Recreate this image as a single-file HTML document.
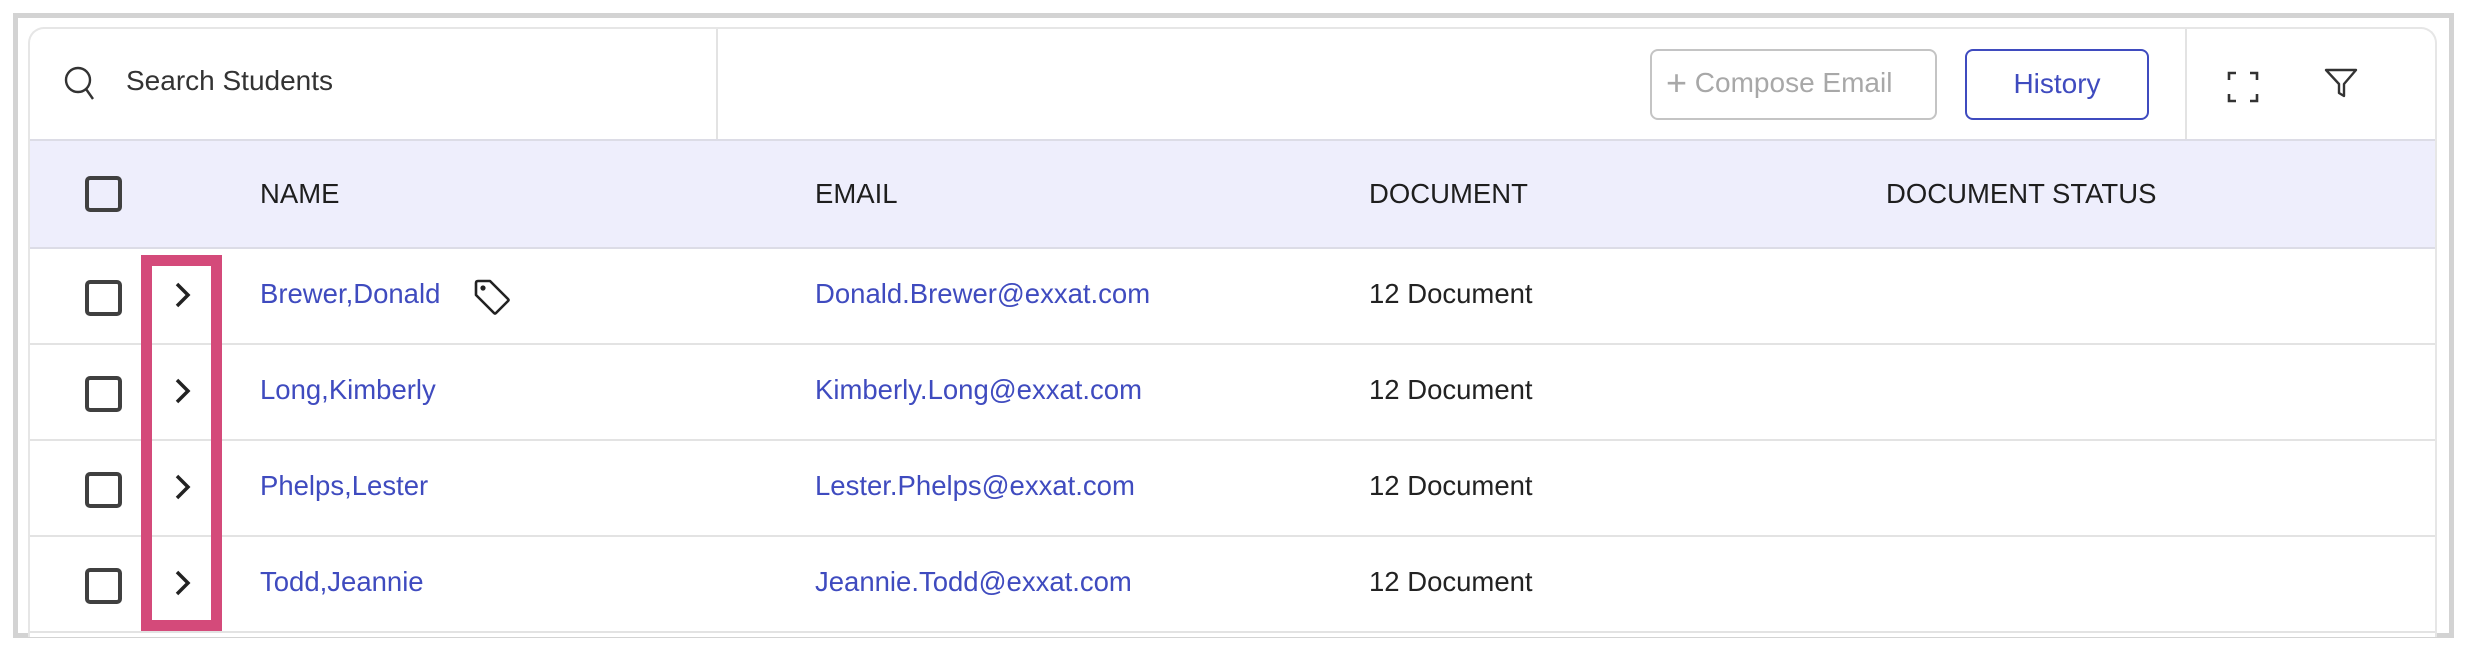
<!DOCTYPE html>
<html><head><meta charset="utf-8"><style>
*{box-sizing:border-box;margin:0;padding:0}
body{width:2466px;height:648px;background:#fff;position:relative;overflow:hidden;font-family:"Liberation Sans",sans-serif}
.frame{position:absolute;left:13px;top:13px;width:2441px;height:625px;border:5px solid #d3d3d3;border-bottom-width:5px}
.card{position:absolute;left:28px;top:27px;width:2409px;height:610px;border:2px solid #e6e6e6;border-radius:16px 16px 0 0;border-bottom:none;overflow:hidden;background:#fff}
.abs{position:absolute}
.t{position:absolute;white-space:nowrap;font-size:27.5px;line-height:30px}
.hdr{position:absolute;left:0;top:110px;width:100%;height:110px;background:#eeeefc;border-top:2px solid #dcdce6;border-bottom:2px solid #dcdce6}
.hl{position:absolute;left:0;width:100%;height:2px;background:#e3e3e3}
.cb{position:absolute;width:37px;height:36px;border:4px solid #404040;border-radius:5px;left:55px}
.link{color:#3f4bbf}
</style></head><body>
<div class="frame"></div>
<div class="card">
  <div class="abs" style="left:686px;top:0;width:2px;height:111px;background:#e3e3e3"></div>
  <div class="abs" style="left:2155px;top:0;width:2px;height:111px;background:#e3e3e3"></div>
  <svg class="abs" style="left:34px;top:37px" width="36" height="36" viewBox="0 0 36 36"><circle cx="14" cy="14" r="12" fill="none" stroke="#333" stroke-width="2.4"/><line x1="22" y1="23" x2="29" y2="33" stroke="#333" stroke-width="2.4"/></svg>
  <div class="t" style="left:96px;top:37px;color:#333;font-size:28px">Search Students</div>
  <div class="abs" style="left:1620px;top:20px;width:287px;height:71px;border:2px solid #c4c4c4;border-radius:8px"></div>
  <div class="t" style="left:1636px;top:39px;color:#a8a8a8;font-size:28px"><span style="font-size:36px;vertical-align:-3px">+</span> Compose Email</div>
  <div class="abs" style="left:1935px;top:20px;width:184px;height:71px;border:2.5px solid #3f4bbf;border-radius:8px"></div>
  <div class="t link" style="left:1935px;top:40px;width:184px;text-align:center;font-size:28px">History</div>
  <svg class="abs" style="left:2197px;top:42px" width="32" height="32" viewBox="0 0 32 32" fill="none" stroke="#333" stroke-width="2.6"><path d="M2 9V2h7M23 2h7v7M30 23v7h-7M9 30H2v-7"/></svg>
  <svg class="abs" style="left:2294px;top:38px" width="34" height="32" viewBox="0 0 34 32" fill="none" stroke="#333" stroke-width="2.4" stroke-linejoin="round"><path d="M2 3h30L20 17v12l-5-3V17Z"/></svg>
  <div class="hdr">
    <div class="cb" style="top:35px"></div>
    <div class="t" style="left:230px;top:38px;color:#1e1e1e">NAME</div>
    <div class="t" style="left:785px;top:38px;color:#1e1e1e">EMAIL</div>
    <div class="t" style="left:1339px;top:38px;color:#1e1e1e">DOCUMENT</div>
    <div class="t" style="left:1856px;top:38px;color:#1e1e1e">DOCUMENT STATUS</div>
  </div>
  <div class="hl" style="top:314px"></div>
  <div class="hl" style="top:410px"></div>
  <div class="hl" style="top:506px"></div>
  <div class="hl" style="top:602px"></div>
  <div class="cb" style="top:251px"></div>
  <div class="cb" style="top:347px"></div>
  <div class="cb" style="top:443px"></div>
  <div class="cb" style="top:539px"></div>
  <svg class="abs" style="left:144px;top:252px" width="18" height="28" viewBox="0 0 18 28"><path d="M3 3l11 11L3 25" fill="none" stroke="#222" stroke-width="3.5"/></svg>
  <svg class="abs" style="left:144px;top:348px" width="18" height="28" viewBox="0 0 18 28"><path d="M3 3l11 11L3 25" fill="none" stroke="#222" stroke-width="3.5"/></svg>
  <svg class="abs" style="left:144px;top:444px" width="18" height="28" viewBox="0 0 18 28"><path d="M3 3l11 11L3 25" fill="none" stroke="#222" stroke-width="3.5"/></svg>
  <svg class="abs" style="left:144px;top:540px" width="18" height="28" viewBox="0 0 18 28"><path d="M3 3l11 11L3 25" fill="none" stroke="#222" stroke-width="3.5"/></svg>
  <div class="t link" style="left:230px;top:250px">Brewer,Donald</div>
  <svg class="abs" style="left:443px;top:249px" width="38" height="38" viewBox="0 0 38 38" fill="none" stroke="#222" stroke-width="2.6" stroke-linejoin="round"><path d="M3 5Q3 3 5 3H17L35 21Q36 22 35 23L23 35Q22 36 21 35L3 17Z"/><circle cx="10" cy="10" r="1.3" fill="#222"/></svg>
  <div class="t link" style="left:785px;top:250px">Donald.Brewer@exxat.com</div>
  <div class="t" style="left:1339px;top:250px;color:#222">12 Document</div>
  <div class="t link" style="left:230px;top:346px">Long,Kimberly</div>
  <div class="t link" style="left:785px;top:346px">Kimberly.Long@exxat.com</div>
  <div class="t" style="left:1339px;top:346px;color:#222">12 Document</div>
  <div class="t link" style="left:230px;top:442px">Phelps,Lester</div>
  <div class="t link" style="left:785px;top:442px">Lester.Phelps@exxat.com</div>
  <div class="t" style="left:1339px;top:442px;color:#222">12 Document</div>
  <div class="t link" style="left:230px;top:538px">Todd,Jeannie</div>
  <div class="t link" style="left:785px;top:538px">Jeannie.Todd@exxat.com</div>
  <div class="t" style="left:1339px;top:538px;color:#222">12 Document</div>
</div>
<div class="abs" style="left:141px;top:255px;width:81px;height:376px;border:11px solid #d44a7a"></div>
</body></html>
